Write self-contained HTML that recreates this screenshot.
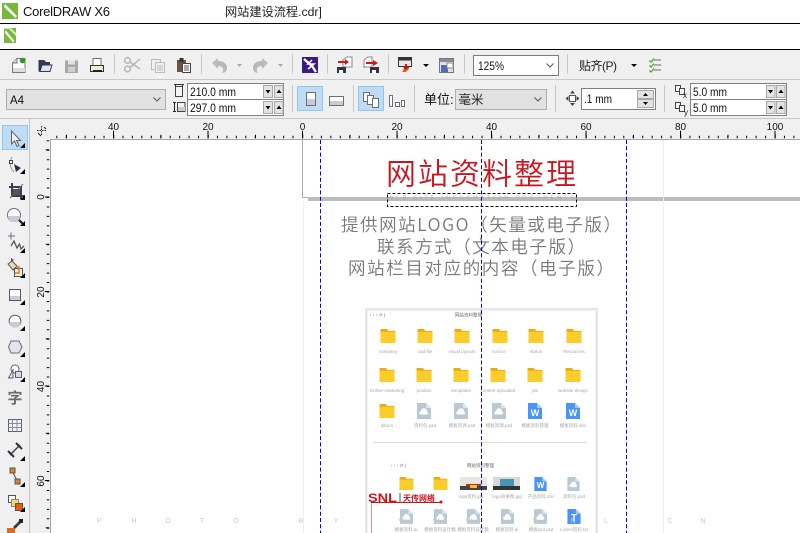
<!DOCTYPE html>
<html lang="zh"><head><meta charset="utf-8"><title>CorelDRAW X6</title>
<style>html,body{margin:0;padding:0;background:#fff;overflow:hidden}svg{display:block}
text{font-family:"Liberation Sans","Noto Sans CJK SC",sans-serif}
.c{font-family:"Noto Sans CJK SC","Liberation Sans",sans-serif}
.l{font-size:4.5px;fill:#888;text-anchor:middle;opacity:.75}</style></head>
<body>
<svg xmlns="http://www.w3.org/2000/svg" width="800" height="533" viewBox="0 0 800 533">
<defs>
<symbol id="fd" viewBox="0 0 16 15" overflow="visible"><path d="M0 0H7L8 2H16V15H0Z" fill="#e8ab12"/><rect y="3" width="16" height="12" fill="#fbcd2b"/></symbol>
<symbol id="dc" viewBox="0 0 14 16" overflow="visible"><path d="M0 0H9L14 5V16H0Z" fill="#b9c8d4"/><path d="M9 0L14 5H9Z" fill="#dbe3ea"/><path d="M3 11.5a2 2 0 0 1 1-3.500a3 3 0 0 1 6 .5a1.600 1.600 0 0 1 0 3Z" fill="#fff"/></symbol>
<symbol id="bd" viewBox="0 0 14 16" overflow="visible"><path d="M0 0H9L14 5V16H0Z" fill="#4a94f8"/><path d="M9 0L14 5H9Z" fill="#a4c9fb"/></symbol>
</defs>
<rect width="800" height="533" fill="#fff"/>
<!-- title bars -->
<g fill="#000"><rect y="23" width="800" height="1"/><rect y="49" width="800" height="1"/></g>
<rect x="2" y="3" width="16" height="16" fill="#76b83a"/>
<path d="M5 4L17 16L15.500 18L4 7Z" fill="#fff"/><path d="M7 5L17 15" stroke="#76b83a" fill="none"/>
<text x="23" y="16" font-size="13" textLength="87" fill="#111">CorelDRAW X6</text>
<text x="225" y="16" font-size="12.200" fill="#222">网站建设流程.cdr]</text>
<rect x="4" y="28" width="12" height="15" fill="#76b83a"/>
<path d="M4 28H11L16 33V36L9 29H4Z" fill="#d8e8c4"/><path d="M5.500 30L14.500 41L13 42.500L5 33Z" fill="#fff"/>
<!-- toolbars bg -->
<rect y="50" width="800" height="69" fill="#f0f0f0"/>
<rect y="79" width="800" height="1" fill="#c8c8c8"/>
<rect y="118" width="800" height="1" fill="#c8c8c8"/>
<!-- separators -->
<g fill="#c9c9c9">
<rect x="114" y="54" width="1" height="20"/><rect x="201" y="54" width="1" height="20"/><rect x="292" y="54" width="1" height="20"/><rect x="327" y="54" width="1" height="20"/><rect x="388" y="54" width="1" height="20"/><rect x="464" y="54" width="1" height="20"/><rect x="567" y="54" width="1" height="20"/>
<rect x="292" y="85" width="1" height="27"/><rect x="353" y="85" width="1" height="27"/><rect x="414" y="85" width="1" height="27"/><rect x="555" y="85" width="1" height="27"/><rect x="664" y="85" width="1" height="27"/>
</g>
<!-- new -->
<path d="M12.500 72.500V63L17 58.500H25V72.500Z" fill="#fff" stroke="#77777f"/><path d="M12.500 63H17V58.500" fill="#ddd" stroke="#77777f"/><rect x="13" y="68" width="12" height="4" fill="#dcdce2"/>
<circle cx="22.500" cy="60.500" r="2.800" fill="#2f9a1f"/>
<!-- open -->
<path d="M38.500 71.500V60H44L46 62H50V71.500Z" fill="#2f3a52"/><path d="M40 71.500L42 65H52L50 71.500Z" fill="#dfe4ee" stroke="#2f3a52"/>
<!-- save -->
<path d="M65 60.500H78V73H65Z" fill="#a8a8a8"/><rect x="68" y="60.500" width="7" height="4" fill="#e2e2e2"/><rect x="68" y="67" width="7" height="5" fill="#d0d0d0"/>
<!-- print -->
<rect x="93" y="58.500" width="8" height="7" fill="#fff" stroke="#67758c"/><rect x="90.500" y="65.500" width="13" height="6" fill="#efeccf" stroke="#333"/><rect x="93" y="70" width="9" height="2" fill="#222"/>
<!-- scissors -->
<g fill="none" stroke="#b8b8b8" stroke-width="1.600"><circle cx="127.500" cy="60.500" r="2.800"/><circle cx="127.500" cy="69" r="2.800"/><path d="M130 62L140 69M130 67.500L140 59"/></g>
<!-- copy -->
<g fill="#f0f0f0" stroke="#bcbcbc"><rect x="151.500" y="59.500" width="9" height="10"/><rect x="155.500" y="62.500" width="9" height="10"/><path d="M157 66h6M157 68h6M157 70h6" fill="none"/></g>
<!-- paste -->
<rect x="177" y="60" width="9" height="12" fill="#6c5344"/><rect x="179.500" y="58" width="4" height="4" fill="#333"/><rect x="182.500" y="63.500" width="8" height="9" fill="#fff" stroke="#444"/><path d="M184 66h5M184 68h5M184 70h5" stroke="#555" fill="none"/>
<!-- undo redo -->
<path d="M212 63L218 58V61C224 61 227 64 227 68C227 71 225 73 222 73C224 71 224 66 218 66V69Z" fill="#b9b9b9"/>
<path d="M268 63L262 58V61C256 61 253 64 253 68C253 71 255 73 258 73C256 71 256 66 262 66V69Z" fill="#b9b9b9"/>
<path d="M237 64h5l-2.500 3Z" fill="#a8a8a8"/><path d="M278 64h5l-2.500 3Z" fill="#a8a8a8"/>
<!-- purple -->
<rect x="302" y="57" width="16" height="16" fill="#3d1a83"/><g fill="none" stroke="#ffffff"><path d="M304 59L312 66L316 72" stroke-width="2.400"/><path d="M312 60L308 64L314 64L308 69" stroke-width="1.500"/></g>
<!-- import/export -->
<path d="M343 68V60L347 57H352V67H343Z" fill="#fff" stroke="#8a8a92"/><rect x="337" y="67" width="9" height="6" fill="#2f3342"/><rect x="339" y="70" width="4" height="3" fill="#fff"/><path d="M338 61H345V59L349 62L345 65V63H338Z" fill="#d01818"/>
<path d="M364 68V60L368 57H372V67H364Z" fill="#fff" stroke="#8a8a92"/><rect x="370" y="67" width="9" height="6" fill="#2f3342"/><rect x="372" y="70" width="4" height="3" fill="#fff"/><path d="M366 62H373V60L378 63L373 66V64H366Z" fill="#d01818"/>
<!-- publish -->
<rect x="398.500" y="57.500" width="13" height="9" fill="#e8e8e8" stroke="#333"/><rect x="399" y="58" width="12" height="2.500" fill="#333"/>
<path d="M402 72C404 70 403 68 405 67L409 67C410 69 407 70 406 72Z" fill="#f05a14"/><path d="M405 64h2v3h2l-3 3-3-3h2Z" fill="#d01818"/>
<path d="M423 64h6l-3 3Z" fill="#000"/>
<rect x="439.500" y="58.500" width="14" height="14" fill="#dde2ec" stroke="#777"/><rect x="440" y="59" width="13" height="3" fill="#8b8f98"/><rect x="441" y="65" width="7" height="7" fill="#4d6fae"/><rect x="447" y="63" width="6" height="5" fill="#fff" stroke="#8b8f98"/>
<!-- zoom combo -->
<rect x="473.500" y="55.500" width="85" height="20" fill="#fff" stroke="#7a7a7a"/>
<text x="478" y="70" font-size="12" textLength="26" lengthAdjust="spacingAndGlyphs" fill="#111">125%</text>
<path d="M546.500 63.500L550 67L553.500 63.500" fill="none" stroke="#555"/>
<!-- snap -->
<text x="579" y="70" font-size="12" textLength="38" fill="#222">贴齐(P)</text>
<path d="M631 64h6l-3 3Z" fill="#000"/>
<g fill="none" stroke="#6a6a78"><path d="M654 60h7M654 65h7M654 70h7"/></g><g fill="none" stroke="#5aa02c" stroke-width="1.300"><path d="M649.500 60.500l1.500 1.500 3-3.500M649.500 65.500l1.500 1.500 3-3.500M649.500 70.500l1.500 1.500 3-3.500"/></g>
<!-- A4 combo -->
<rect x="6.500" y="89.500" width="159" height="20" fill="#e1e1e1" stroke="#adadad"/>
<text x="10" y="104" font-size="11.500" fill="#111">A4</text>
<path d="M153.500 97.500L157 101L160.500 97.500" fill="none" stroke="#555"/>
<!-- w/h icons -->
<rect x="175.500" y="86.500" width="7" height="10" fill="#f4f4f4" stroke="#444"/><path d="M174 84.500h10M175.500 84v3M182.500 84v3" stroke="#333" fill="none"/>
<rect x="177.500" y="102.500" width="7.500" height="9" fill="#f4f4f4" stroke="#444"/><rect x="178" y="107" width="7" height="4" fill="#c8ccd4"/><path d="M174.500 102v10M173 102.500h3M173 111.500h3" stroke="#222" fill="none"/>
<!-- spinner group 1 -->
<rect x="187.500" y="83.500" width="96" height="32" fill="#fff" stroke="#808080"/><rect x="187" y="99" width="97" height="1" fill="#808080"/>
<text x="190" y="96" font-size="12" textLength="46" lengthAdjust="spacingAndGlyphs" fill="#111">210.0 mm</text><text x="190" y="112" font-size="12" textLength="46" lengthAdjust="spacingAndGlyphs" fill="#111">297.0 mm</text>
<g fill="#e3e3e3" stroke="#a8a8a8"><rect x="263.500" y="85.500" width="9" height="12"/><rect x="274.500" y="85.500" width="8.500" height="12"/><rect x="263.500" y="101.500" width="9" height="12"/><rect x="274.500" y="101.500" width="8.500" height="12"/></g>
<g fill="#000"><path d="M265.500 90h5l-2.500 3.500Z"/><path d="M276.500 93h5l-2.500-3.500Z"/><path d="M265.500 106h5l-2.500 3.500Z"/><path d="M276.500 109h5l-2.500-3.500Z"/></g>
<!-- orientation -->
<rect x="297.500" y="86.500" width="25" height="24" fill="#c0dcf3" stroke="#8cc8f6"/>
<rect x="306.500" y="92.500" width="9" height="13" fill="#fff" stroke="#6a6f7a"/><rect x="307" y="99" width="8" height="6" fill="#c8ccd4"/>
<rect x="329.500" y="96.500" width="14" height="9" fill="#fff" stroke="#6a6f7a"/><rect x="330" y="101" width="13" height="4" fill="#c8ccd4"/>
<rect x="358.500" y="86.500" width="25" height="24" fill="#c0dcf3" stroke="#8cc8f6"/>
<g stroke="#6a6f7a" fill="#fff"><rect x="363.500" y="92.500" width="6" height="9"/><rect x="367.500" y="95.500" width="6" height="9"/><rect x="372.500" y="98.500" width="6" height="9"/></g>
<g stroke="#6a6f7a" fill="#fff"><rect x="389.500" y="95.500" width="3" height="11"/><rect x="395.500" y="102.500" width="4" height="4"/><rect x="401.500" y="100.500" width="3" height="6"/></g>
<!-- units -->
<text x="424" y="104" font-size="13" fill="#111">单位:</text>
<rect x="455.500" y="89.500" width="91" height="20" fill="#e1e1e1" stroke="#adadad"/>
<text x="458.500" y="104" font-size="12.500" fill="#222">毫米</text>
<path d="M534.500 97.500L538 101L541.500 97.500" fill="none" stroke="#555"/>
<!-- nudge -->
<rect x="569.500" y="95.500" width="6" height="6" fill="#fff" stroke="#555"/><path d="M572.500 90.500l2.500 3h-5ZM572.500 106l2.500-3h-5ZM565.500 98.500l3-2.500v5ZM579.500 98.500l-3-2.500v5Z" fill="#444"/>
<rect x="581.500" y="88.500" width="74" height="21" fill="#fff" stroke="#808080"/>
<text x="584" y="103" font-size="12" textLength="28" lengthAdjust="spacingAndGlyphs" fill="#111">.1 mm</text>
<g fill="#e3e3e3" stroke="#a8a8a8"><rect x="637.500" y="90.500" width="16" height="8"/><rect x="637.500" y="99.500" width="16" height="8"/></g>
<path d="M643 96h5l-2.500-3Z M643 102h5l-2.500 3Z" fill="#000"/>
<!-- dup offsets -->
<g fill="#f4f4f4" stroke="#444"><rect x="675.500" y="85.500" width="5" height="6"/><rect x="679.500" y="88.500" width="5" height="6"/><rect x="675.500" y="102.500" width="5" height="6"/><rect x="679.500" y="105.500" width="5" height="6"/></g>
<text x="683" y="98" font-size="8" fill="#222">x</text><text x="684" y="115" font-size="8" fill="#222">y</text>
<rect x="690.500" y="83.500" width="96" height="32" fill="#fff" stroke="#808080"/><rect x="690" y="99" width="97" height="1" fill="#808080"/>
<text x="693" y="96" font-size="12" textLength="34" lengthAdjust="spacingAndGlyphs" fill="#111">5.0 mm</text><text x="693" y="112" font-size="12" textLength="34" lengthAdjust="spacingAndGlyphs" fill="#111">5.0 mm</text>
<g fill="#e3e3e3" stroke="#a8a8a8"><rect x="766.500" y="85.500" width="8.500" height="12"/><rect x="776.500" y="85.500" width="8.500" height="12"/><rect x="766.500" y="101.500" width="8.500" height="12"/><rect x="776.500" y="101.500" width="8.500" height="12"/></g>
<g fill="#000"><path d="M768 90h5l-2.500 3.500Z"/><path d="M778.500 93h5l-2.500-3.500Z"/><path d="M768 106h5l-2.500 3.500Z"/><path d="M778.500 109h5l-2.500-3.500Z"/></g>

<!-- rulers / left bar -->
<rect y="119" width="30" height="414" fill="#f0f0f0"/>
<rect x="30" y="119" width="770" height="20" fill="#f0f0f0"/>
<rect x="30" y="139" width="20" height="394" fill="#f0f0f0"/>
<rect x="29" y="119" width="1" height="414" fill="#c2c2c2"/>
<rect x="50" y="139" width="750" height="1" fill="#a4a4a4"/>
<rect x="50" y="139" width="1" height="394" fill="#a4a4a4"/>
<!-- h ticks -->
<g fill="none" stroke="#000" stroke-width="1">
<line x1="56.300" y1="137" x2="800" y2="137" stroke-width="2.400" stroke-dasharray="1 8.450"/>
<line x1="66" y1="136.500" x2="800" y2="136.500" stroke-width="3.400" stroke-dasharray="1 46.250"/>
<line x1="113" y1="134.500" x2="800" y2="134.500" stroke-width="7.400" stroke-dasharray="1 93.500"/>
<line x1="48" y1="140.300" x2="48" y2="533" stroke-width="2.400" stroke-dasharray="1 8.450"/>
<line x1="47.500" y1="149.300" x2="47.500" y2="533" stroke-width="3.400" stroke-dasharray="1 46.250"/>
<line x1="47" y1="196.500" x2="47" y2="533" stroke-width="4.400" stroke-dasharray="1 93.500"/>
</g>
<g font-size="10" fill="#111" text-anchor="middle">
<text x="113.500" y="130">40</text><text x="208" y="130">20</text><text x="302.500" y="130">0</text><text x="397" y="130">20</text><text x="491.500" y="130">40</text><text x="586" y="130">60</text><text x="680.500" y="130">80</text><text x="775" y="130">100</text>
<text transform="translate(44 197) rotate(-90)">0</text><text transform="translate(44 292) rotate(-90)">20</text><text transform="translate(44 386.500) rotate(-90)">40</text><text transform="translate(44 481) rotate(-90)">60</text>
</g>
<!-- ruler origin -->
<g fill="none" stroke="#222" stroke-dasharray="1.500 1"><path d="M37 130.500h9M41.500 126v10"/></g><path d="M38 133l3 3M44 127l2 2" stroke="#222"/>

<!-- left tool icons -->
<rect x="2.500" y="125.500" width="25" height="24" fill="#c0dcf3" stroke="#8cc8f6"/>
<path d="M11.500 131V144L14.500 141L17 146.500L19 145.500L16.500 140.500H20.500Z" fill="#eef1f6" stroke="#5d6270"/>
<!-- shape -->
<path d="M12 157C9 163 10 168 14 172" fill="none" stroke="#9a9aa8"/><rect x="9.500" y="160.500" width="3" height="3" fill="#fff" stroke="#444"/><path d="M14 164L21 168L16 172Z" fill="#2a2f45"/>
<!-- crop -->
<path d="M12 183V196H25M9 187H21V199" fill="none" stroke="#3c3f50" stroke-width="2"/><path d="M10 198L23 184" stroke="#6a6a78"/><rect x="13" y="189" width="7" height="6" fill="#555"/>
<!-- zoom -->
<circle cx="14" cy="215" r="6.500" fill="#fff" stroke="#6a6f7a"/><path d="M8 216H20A6 6 0 0 1 8 216Z" fill="#c8ccd8"/><path d="M19 220L24 225" stroke="#222" stroke-width="2.200"/>
<!-- freehand -->
<path d="M8 236h7M11 232.500v7" stroke="#70707a" fill="none"/><path d="M11 246L14 241L17 248L19.500 244L21 249L24 246" fill="none" stroke="#555562" stroke-width="1.300"/>
<!-- smart fill -->
<path d="M8 264L12 261L17 266L13 270Z" fill="#f0d9b0" stroke="#555"/><rect x="14.500" y="268.500" width="8" height="8" fill="#ededed" stroke="#555"/><path d="M11 262L11 258L14 260Z" fill="#555"/><path d="M16 267H19V273H15" fill="none" stroke="#e87a10" stroke-width="1.500"/>
<!-- rect -->
<rect x="9.500" y="289.500" width="11" height="11" fill="#fff" stroke="#55576a"/><rect x="10" y="296" width="10" height="4" fill="#c9ccd6"/>
<!-- ellipse -->
<circle cx="15" cy="321" r="5.800" fill="#fff" stroke="#55576a"/><path d="M9.500 322H20.500A5.500 5.500 0 0 1 9.500 322Z" fill="#c9ccd6"/>
<!-- polygon -->
<path d="M11 341H19L22 347L19 353H11L8.500 347Z" fill="#e3e5ec" stroke="#6a6f7a"/>
<!-- basic -->
<circle cx="15" cy="369" r="4" fill="#fff" stroke="#5a5f70"/><rect x="15.500" y="371.500" width="6" height="6" fill="#d8dbe3" stroke="#5a5f70"/><path d="M8.500 378L13 370V378Z" fill="#e8e8ee" stroke="#5a5f70"/>
<!-- text -->
<text x="15" y="403" font-size="15" font-weight="700" class="c" text-anchor="middle" fill="#6a6a70">字</text>
<!-- table -->
<rect x="8.500" y="419.500" width="13" height="12" fill="#eef0f5" stroke="#5c6070"/><path d="M8.500 423.500h13M8.500 427.500h13M12.500 419.500v12M17 419.500v12" stroke="#8a8e9c" fill="none"/>
<!-- dim -->
<path d="M10 455L20 445" stroke="#444" stroke-width="1.500"/><path d="M8 451L14 457M16 443L22 449" stroke="#2a2f45" stroke-width="2"/>
<!-- connector -->
<path d="M12 471L18 482" stroke="#555" stroke-width="1"/><rect x="10" y="468" width="5" height="5" fill="#e08020" stroke="#555"/><rect x="15" y="479" width="5" height="5" fill="#e08020" stroke="#555"/>
<!-- blend -->
<rect x="8.500" y="495.500" width="7" height="7" fill="#fff" stroke="#555"/><rect x="11.500" y="499.500" width="7" height="7" fill="#f8d678" stroke="#888"/><rect x="15.500" y="503.500" width="7" height="7" fill="#f05a08" stroke="#555"/>
<!-- eyedropper -->
<path d="M13 527L20 520L22 522L15 529Z" fill="#3a3f50"/><rect x="19" y="519" width="4" height="4" fill="#222"/><rect x="7" y="528" width="8" height="5" fill="#e06a18"/>
<!-- flyouts -->
<g fill="#000"><path d="M25 143V148H20Z"/><path d="M25 169V174H20Z"/><path d="M25 195V200H20Z"/><path d="M25 221V226H20Z"/><path d="M25 248V253H20Z"/><path d="M25 273V278H20Z"/><path d="M25 300V305H20Z"/><path d="M25 326V331H20Z"/><path d="M25 352V357H20Z"/><path d="M25 377V382H20Z"/><path d="M25 456V461H20Z"/><path d="M25 482V487H20Z"/><path d="M25 507V512H20Z"/></g>

<!-- page edges -->
<rect x="302" y="140" width="1" height="58" fill="#adadad"/>
<rect x="302" y="197" width="6" height="1" fill="#adadad"/>
<rect x="308" y="197" width="492" height="4" fill="#bcbcbc"/>
<rect x="303" y="201" width="1" height="332" fill="#eeeeee"/>
<rect x="663" y="140" width="1" height="393" fill="#eeeeee"/>

<!-- doc text -->
<text x="386" y="184.500" font-size="30" font-weight="350" class="c" fill="#c8161f" textLength="190" lengthAdjust="spacing">网站资料整理</text>
<text x="388" y="199.500" font-size="5.500" fill="#aaa" textLength="186">WEB SITE INFORMATION DOCUMENTS</text>
<rect x="387.500" y="193.500" width="189" height="13" fill="none" stroke="#000" stroke-dasharray="3 2"/>
<g font-size="17.500" font-weight="350" fill="#777">
<text x="341" y="231" class="c" textLength="280">提供网站LOGO（矢量或电子版）</text>
<text x="377" y="253" class="c" textLength="208">联系方式（文本电子版）</text>
<text x="348" y="274.500" class="c" textLength="266">网站栏目对应的内容（电子版）</text>
</g>

<!-- embedded screenshot -->
<rect x="365" y="308" width="233" height="225" fill="#e6e6e6"/>
<rect x="367.500" y="310.500" width="228" height="222.500" fill="#fff"/>
<text x="370" y="316.500" font-size="4.500" fill="#777">‹ › ↑ ⟳ |</text><text x="455" y="316.500" font-size="4.500" fill="#666">网站资料整理</text>
<g>
<use href="#fd" x="380" y="329" width="16" height="14"/><use href="#fd" x="417" y="329" width="16" height="14"/><use href="#fd" x="454" y="329" width="16" height="14"/><use href="#fd" x="492" y="329" width="16" height="14"/><use href="#fd" x="528" y="329" width="16" height="14"/><use href="#fd" x="566" y="329" width="16" height="14"/>
<use href="#fd" x="379" y="368" width="16" height="14"/><use href="#fd" x="416" y="368" width="16" height="14"/><use href="#fd" x="453" y="368" width="16" height="14"/><use href="#fd" x="490" y="368" width="16" height="14"/><use href="#fd" x="527" y="368" width="16" height="14"/><use href="#fd" x="565" y="368" width="16" height="14"/>
<use href="#fd" x="379" y="404" width="16" height="14"/>
<use href="#dc" x="417" y="403" width="14" height="16"/><use href="#dc" x="454" y="403" width="14" height="16"/><use href="#dc" x="492" y="403" width="14" height="16"/>
<use href="#bd" x="528" y="403" width="14" height="16"/><use href="#bd" x="566" y="403" width="14" height="16"/>
</g>
<text x="535" y="416" font-size="9" font-weight="700" fill="#fff" text-anchor="middle">W</text><text x="573" y="416" font-size="9" font-weight="700" fill="#fff" text-anchor="middle">W</text>
<text class="l" x="388" y="353">company</text><text class="l" x="425" y="353">cad file</text><text class="l" x="462" y="353">visual layouts</text><text class="l" x="499" y="353">source</text><text class="l" x="536" y="353">status</text><text class="l" x="574" y="353">Resources</text>
<text class="l" x="387" y="392">Online-marketing</text><text class="l" x="424" y="392">product</text><text class="l" x="461" y="392">templates</text><text class="l" x="498" y="392">content-uploaded</text><text class="l" x="535" y="392">ptx</text><text class="l" x="573" y="392">website-design</text>
<text class="l" x="387" y="427">album</text><text class="l" x="425" y="427">资料包.psd</text><text class="l" x="462" y="427">模板资源.psd</text><text class="l" x="499" y="427">模板资源.psd</text><text class="l" x="535" y="427">模板资料管理</text><text class="l" x="573" y="427">模板资料.doc</text>
<rect x="373" y="442" width="214" height="1" fill="#dcdcdc"/>
<text x="391" y="467" font-size="4.500" fill="#777">‹ › ↑ ⟳ |</text><text x="467" y="467" font-size="4.500" fill="#666">网站资料整理</text>
<use href="#fd" x="399" y="477" width="15" height="13"/><use href="#fd" x="433" y="477" width="15" height="13"/>
<rect x="460" y="477" width="27" height="13" fill="#e9e6e0"/><rect x="466" y="484" width="15" height="6" fill="#b83225"/><rect x="460" y="486" width="27" height="4" fill="#444"/><rect x="470" y="485" width="7" height="3" fill="#f0c030"/>
<rect x="493" y="477" width="27" height="13" fill="#d8d8d4"/><rect x="500" y="479" width="14" height="8" fill="#4a92b8"/><rect x="493" y="486" width="27" height="4" fill="#333"/>
<use href="#bd" x="534" y="477" width="13" height="14"/><text x="540.500" y="488" font-size="8" font-weight="700" fill="#fff" text-anchor="middle">W</text>
<use href="#dc" x="567" y="477" width="13" height="14"/>
<text class="l" x="471" y="498">logo资料.jpg</text><text class="l" x="507" y="498">logo效果图.jpg</text><text class="l" x="541" y="498">产品资料.doc</text><text class="l" x="574" y="498">资料包.psd</text>
<use href="#dc" x="400" y="509" width="13" height="15"/><use href="#dc" x="434" y="509" width="13" height="15"/><use href="#dc" x="467" y="509" width="13" height="15"/><use href="#dc" x="501" y="509" width="13" height="15"/><use href="#dc" x="534" y="509" width="13" height="15"/><use href="#bd" x="567" y="509" width="14" height="15"/>
<text x="574" y="521" font-size="10" font-weight="700" fill="#fff" text-anchor="middle">T</text>
<text class="l" x="406" y="531">模板资料.ai</text><text class="l" x="440" y="531">模板资料设计稿</text><text class="l" x="473" y="531">模板资料设计稿</text><text class="l" x="507" y="531">模板资料.ai</text><text class="l" x="541" y="531">模板psd.psd</text><text class="l" x="574" y="531">Lorem资料.txt</text>
<!-- SNL logo -->
<text x="368" y="502" font-size="11.500" font-weight="700" fill="#c8161f" textLength="29" lengthAdjust="spacingAndGlyphs">SNL</text>
<rect x="399.500" y="493" width="1" height="9" fill="#555"/>
<text x="403" y="501" font-size="8" font-weight="700" class="c" fill="#c8161f">天传网络</text>
<rect x="371" y="502" width="70" height="1" fill="#c8161f"/><circle cx="441" cy="502" r="1.500" fill="#c8161f"/>
<rect x="371" y="503" width="1" height="30" fill="#e38b90"/>

<!-- watermark -->
<g font-size="7" fill="#c8c8c8" text-anchor="middle">
<text x="99" y="523">P</text><text x="134" y="523">H</text><text x="168" y="523">O</text><text x="202" y="523">T</text><text x="236" y="523">O</text><text x="301" y="523">B</text><text x="336" y="523">Y</text><text x="402" y="523">W</text><text x="436" y="523">W</text><text x="469" y="523">W</text><text x="535" y="523">S</text><text x="573" y="523">N</text><text x="606" y="523">L</text><text x="639" y="523">.</text><text x="670" y="523">C</text><text x="703" y="523">N</text>
</g>

<!-- guides -->
<g stroke="#0000d8" stroke-width="1" stroke-dasharray="4 2.300" fill="none">
<line x1="320.500" y1="140" x2="320.500" y2="533"/><line x1="481.500" y1="140" x2="481.500" y2="533"/><line x1="626.500" y1="140" x2="626.500" y2="533"/>
</g>
</svg>
</body></html>
